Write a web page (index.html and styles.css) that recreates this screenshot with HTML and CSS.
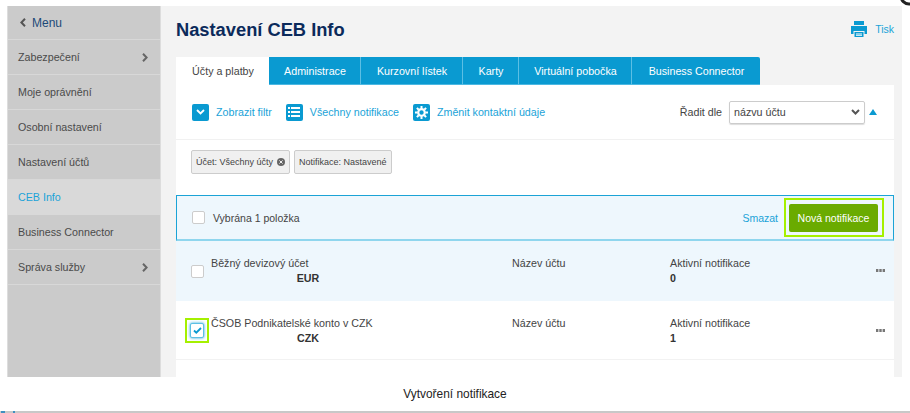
FILE: index.html
```html
<!DOCTYPE html>
<html lang="cs">
<head>
<meta charset="utf-8">
<title>Nastavení CEB Info</title>
<link rel="stylesheet" href="styles.css">
</head>
<body>
<svg class="corner" width="12" height="6" viewBox="0 0 12 6"><circle cx="11" cy="-4" r="8" fill="none" stroke="#222" stroke-width="3"/></svg>
<div class="shot">
  <nav class="side">
    <div class="side-item menu"><svg class="back" width="6" height="9" viewBox="0 0 6 9"><path d="M5 .8 1.400 4.500 5 8.200" fill="none" stroke="#555" stroke-width="2"/></svg>Menu</div>
    <div class="side-item"><span>Zabezpečení</span><svg class="chev" width="6" height="9" viewBox="0 0 6 9"><path d="M1 .8 4.600 4.500 1 8.200" fill="none" stroke="#666" stroke-width="2"/></svg></div>
    <div class="side-item">Moje oprávnění</div>
    <div class="side-item">Osobní nastavení</div>
    <div class="side-item">Nastavení účtů</div>
    <div class="side-item active">CEB Info</div>
    <div class="side-item">Business Connector</div>
    <div class="side-item"><span>Správa služby</span><svg class="chev" width="6" height="9" viewBox="0 0 6 9"><path d="M1 .8 4.600 4.500 1 8.200" fill="none" stroke="#666" stroke-width="2"/></svg></div>
  </nav>
  <main class="main">
    <header class="head">
      <h1>Nastavení CEB Info</h1>
      <a class="print"><svg width="16" height="16" viewBox="0 0 16 16"><path fill="#0a9ad1" d="M3 0h10v4H3zM0 5h16v8h-2.500v-3h-11v3H0zM3.500 11h9v5h-9z"/><path fill="#fff" d="M5 12.500h6v1H5zM5 14.300h6v.7H5z"/></svg>Tisk</a>
    </header>
    <div class="tabs">
      <span class="tab current">Účty a platby</span><span class="tab t1">Administrace</span><span class="tab t2">Kurzovní lístek</span><span class="tab t3">Karty</span><span class="tab t4">Virtuální pobočka</span><span class="tab t5">Business Connector</span>
    </div>
    <section class="panel">
      <div class="tools">
        <a class="tool"><span class="ico"><svg width="9" height="6" viewBox="0 0 9 6"><path d="M1 1l3.500 3.500L8 1" fill="none" stroke="#fff" stroke-width="1.800"/></svg></span>Zobrazit filtr</a>
        <a class="tool"><span class="ico"><svg width="12" height="12" viewBox="0 0 12 12"><path fill="#fff" d="M0 1h2v2H0zM3 1h9v2H3zM0 5h2v2H0zM3 5h9v2H3zM0 9h2v2H0zM3 9h9v2H3z"/></svg></span>Všechny notifikace</a>
        <a class="tool"><span class="ico"><svg width="13" height="13" viewBox="0 0 13 13"><circle cx="6.500" cy="6.500" r="3.300" fill="none" stroke="#fff" stroke-width="2.200"/><path stroke="#fff" stroke-width="2" d="M6.500 0v2.500M6.500 10.500V13M0 6.500h2.500M10.500 6.500H13M1.900 1.900l1.800 1.800M9.300 9.300l1.800 1.800M1.900 11.100l1.800-1.800M9.300 3.700l1.800-1.800"/></svg></span>Změnit kontaktní údaje</a>
        <div class="sort">
          <label>Řadit dle</label>
          <div class="select">názvu účtu<svg width="9" height="6" viewBox="0 0 9 6"><path d="M1 1l3.500 3.500L8 1" fill="none" stroke="#555" stroke-width="2"/></svg></div>
          <span class="tri"></span>
        </div>
      </div>
      <div class="chips">
        <span class="chip">Účet: Všechny účty<svg width="8" height="8" viewBox="0 0 8 8"><circle cx="4" cy="4" r="4" fill="#666"/><path d="M2.400 2.400l3.200 3.200M5.600 2.400 2.400 5.600" stroke="#eee" stroke-width="1"/></svg></span>
        <span class="chip">Notifikace: Nastavené</span>
      </div>
      <div class="selbar">
        <span class="box"></span><span class="seltext">Vybrána 1 položka</span>
        <a class="del">Smazat</a>
        <span class="hl"><span class="btn">Nová notifikace</span></span>
      </div>
      <div class="row tint">
        <span class="box rowbox"></span>
        <div class="acc"><div>Běžný devizový účet</div><b>EUR</b></div>
        <div class="nm">Název účtu</div>
        <div class="act"><div>Aktivní notifikace</div><b>0</b></div>
        <svg class="dots" width="9" height="3" viewBox="0 0 9 3"><path fill="#777" d="M0 0h2.400v3H0zM3.300 0h2.400v3H3.300zM6.600 0H9v3H6.600z"/></svg>
      </div>
      <div class="row">
        <span class="hlbox"><span class="box checked"><svg width="9" height="7" viewBox="0 0 9 7"><path d="M1 3.500 3.300 5.700 8 1" fill="none" stroke="#0a9ad1" stroke-width="1.800"/></svg></span></span>
        <div class="acc"><div>ČSOB Podnikatelské konto v CZK</div><b>CZK</b></div>
        <div class="nm">Název účtu</div>
        <div class="act"><div>Aktivní notifikace</div><b>1</b></div>
        <svg class="dots" width="9" height="3" viewBox="0 0 9 3"><path fill="#777" d="M0 0h2.400v3H0zM3.300 0h2.400v3H3.300zM6.600 0H9v3H6.600z"/></svg>
      </div>
    </section>
  </main>
</div>
<p class="caption">Vytvoření notifikace</p>
<div class="rule"><span class="mark m1"></span><span class="mark m2"></span></div>
</body>
</html>
```
FILE: styles.css
```css
* { box-sizing: border-box; }
html, body { margin: 0; height: 413px; overflow: hidden; background: #fff; }
body { font-family: "Liberation Sans", Arial, sans-serif; font-size: 10.700px; color: #444; display: flex; flex-direction: column; padding-top: 6px; position: relative; }
.corner { position: absolute; right: 0; top: 0; }
.shot { display: flex; height: 371px; margin-left: 7px; width: 895px; background: #f3f3f3; overflow: hidden; flex: none; }
.side { width: 154px; flex: none; background: #cbcbcb; border-left: 1px solid #ddd; border-right: 1px solid #ddd; }
.side-item { height: 35px; display: flex; align-items: center; justify-content: space-between; padding: 0 12px 0 10px; border-bottom: 1px solid #d8d8d8; color: #4a4a4a; }
.side-item.menu { height: 34px; font-size: 12px; color: #1d4a78; justify-content: flex-start; padding-left: 12px; }
.back { margin-right: 6px; }
.side-item.active { background: #d9d9d9; color: #1aa3d8; border-bottom-color: #d9d9d9; }
.main { flex: 1; padding: 0 8px 0 15px; min-width: 0; }
.head { height: 51px; display: flex; justify-content: space-between; align-items: center; padding-bottom: 3px; }
h1 { margin: 0; font-size: 18.300px; font-weight: bold; color: #0b2a5b; }
.print { display: flex; align-items: center; gap: 8px; color: #1aa3d8; font-size: 10.500px; margin-top: -3px; }
.tabs { display: flex; height: 28px; }
.tab { background: #0a9ad1; color: #fff; display: flex; align-items: center; justify-content: center; padding-left: 1px; border-right: 1px solid #5cbfe4; border-bottom: 1px solid #4cb8e2; }
.tab.current { background: #fff; color: #444; width: 93px; border: 0; }
.t1 { width: 92px; }
.t2 { width: 102px; }
.t3 { width: 56px; }
.t4 { width: 113px; }
.t5 { width: 128px; border-right: 0; border-top-right-radius: 2px; }
.panel { background: #fff; height: 292px; }
.tools { height: 55px; display: flex; align-items: center; padding-left: 16px; gap: 14px; border-bottom: 1px solid #f1f1f1; }
.tool { display: flex; align-items: center; gap: 7px; color: #1aa3d8; }
.ico { width: 17px; height: 17px; background: #0a9ad1; border-radius: 2px; display: flex; align-items: center; justify-content: center; }
.sort { margin-left: auto; display: flex; align-items: center; margin-right: 17px; }
.sort label { margin-right: 7px; color: #444; }
.select { width: 136px; height: 23px; border: 1px solid #ccc; border-radius: 2px; padding: 0 4px; display: flex; align-items: center; justify-content: space-between; box-shadow: 0 1px 1px #ddd; }
.tri { width: 0; height: 0; border-left: 4.500px solid transparent; border-right: 4.500px solid transparent; border-bottom: 6px solid #0a9ad1; margin-left: 4px; }
.chips { height: 55px; display: flex; gap: 4px; padding: 10px 0 0 15px; align-items: flex-start; }
.chip { height: 24px; padding: 0 4px; background: #f0f0f0; border: 1px solid #ccc; border-radius: 2px; display: flex; align-items: center; gap: 4px; font-size: 9px; }
.selbar { height: 46px; background: #eef7fd; border: 1px solid #1ba3d6; border-bottom: 2px solid #8fd6ee; display: flex; align-items: center; padding: 0 9px 0 15px; font-size: 10.500px; }
.box { width: 13px; height: 13px; background: #fff; border: 1px solid #ccc; border-radius: 2px; display: block; flex: none; }
.seltext { margin-left: 8px; }
.del { margin-left: auto; color: #1aa3d8; margin-right: 6px; }
.hl { border: 2px solid #a5f000; padding: 4px 4px 3px 3px; display: block; }
.btn { display: flex; align-items: center; justify-content: center; width: 89px; height: 28px; background: #6aab00; color: #fff; border-radius: 2px; }
.row { height: 59px; display: flex; align-items: flex-start; position: relative; border-bottom: 1px solid #f2f2f2; padding-top: 17px; line-height: 14px; }
.tint { background: #eef7fd; height: 60px; border: 0; }
.rowbox { margin: 7px 0 0 15px; }
.hlbox { position: absolute; left: 9px; top: 17px; width: 24px; height: 25px; border: 2px solid #a5f000; padding: 3px; }
.checked { width: 14px; height: 15px; border-color: #5cc0e5; box-shadow: 0 0 3px #1ba3d6; display: flex; align-items: center; justify-content: center; }
.acc { position: absolute; left: 35px; top: 15px; width: 194px; }
.acc b { display: block; text-align: center; color: #333; margin-top: 1px; }
.nm { position: absolute; left: 336px; top: 15px; }
.act { position: absolute; left: 494px; top: 15px; }
.act b { color: #333; display: block; margin-top: 1px; }
.dots { position: absolute; right: 9px; top: 28px; }
.caption { margin: 0; height: 34px; flex: none; display: flex; align-items: center; justify-content: center; font-size: 11.900px; color: #222; }
.rule { height: 2px; background: #c8c8c8; flex: none; display: flex; }
.mark { height: 2px; background: #3f8fc0; display: block; }
.m1 { width: 4px; margin-left: 1px; }
.m2 { width: 2px; margin-left: 8px; }
```
